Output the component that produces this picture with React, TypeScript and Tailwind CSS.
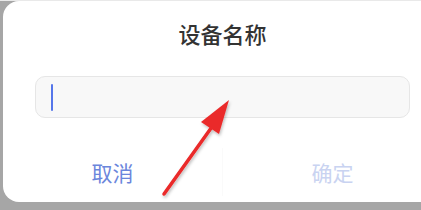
import React from "react";

export default function App() {
  return (
    <div
      className="relative w-[421px] h-[210px] overflow-hidden bg-[#a6a6a6]"
      style={{ fontFamily: '"Noto Sans CJK SC", "Noto Sans", sans-serif' }}
    >
      <div className="h-px w-full bg-[#e9e9e9]" />
      <div className="ml-[3px] w-[439px] h-[201px] bg-white rounded-[16px] flex flex-col">
        <div className="pt-[18px] h-[46px] flex justify-center">
          <span className="text-[22px] leading-[28px] font-medium text-[#333333]">设备名称</span>
        </div>
        <div className="mt-[29px] mx-[32px] h-[42px] rounded-[10px] border border-[#e6e6e6] bg-[#f8f8f8] flex items-center pl-[15px]">
          <div className="w-[2px] h-[27px] bg-[#5576ea] rounded-full" />
        </div>
        <div className="mt-[24px] flex-1 flex">
          <div className="flex-1 flex items-center justify-center">
            <span className="text-[21px] leading-[28px] text-[#6b86dc]">取消</span>
          </div>
          <div className="w-px my-[6px] bg-[#fafafa]" />
          <div className="flex-1 flex items-center justify-center">
            <span className="text-[21px] leading-[28px] text-[#c9d3f1]">确定</span>
          </div>
        </div>
      </div>
      <svg
        className="absolute left-0 top-0 pointer-events-none"
        width="421"
        height="210"
        viewBox="0 0 421 210"
      >
        <defs>
          <filter id="sh" x="-20%" y="-20%" width="140%" height="140%">
            <feDropShadow dx="1" dy="2" stdDeviation="1.5" floodColor="#000" floodOpacity="0.25" />
          </filter>
        </defs>
        <g filter="url(#sh)">
          <line x1="164" y1="194" x2="214" y2="124" stroke="#ea2a2a" strokeWidth="3.5" strokeLinecap="round" />
          <polygon points="229,100 201,122 219,134" fill="#ea2a2a" />
        </g>
      </svg>
    </div>
  );
}
